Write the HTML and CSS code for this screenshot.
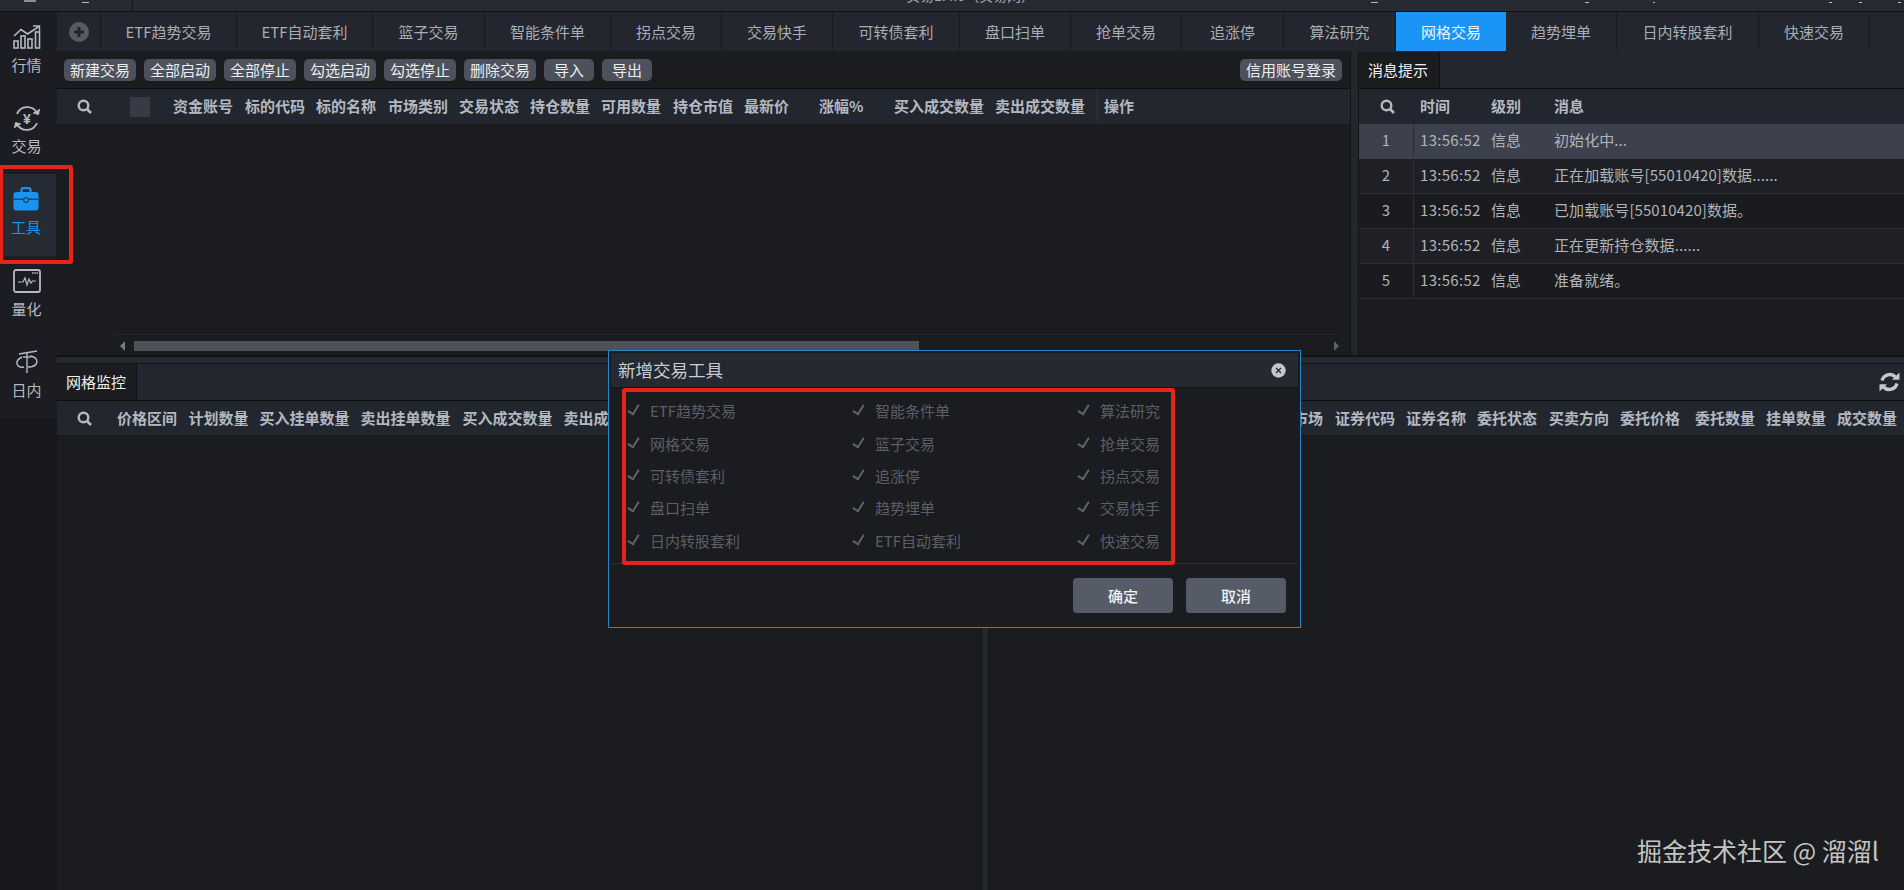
FILE: index.html
```html
<!DOCTYPE html>
<html lang="zh-CN">
<head>
<meta charset="utf-8">
<title>网格交易</title>
<link rel="stylesheet" href="styles.css">
</head>
<body>
<header class="titlebar">
  <i class="mark mark-logo"></i><i class="mark mark-a"></i><i class="mark mark-sep"></i>
  <span class="app-title">实易1.4.0（实易网）</span>
  <i class="mark mark-b"></i><i class="mark mark-c"></i><i class="mark mark-d"></i><i class="mark mark-e"></i><i class="mark mark-f"></i><i class="mark mark-g"></i>
</header>
<div class="app">
  <nav class="sidebar-col">
    <div class="sidebar">
      <div class="nav-item">
        <span class="nav-slot"><svg width="28" height="24" viewBox="0 0 28 24" fill="none" stroke="#b6bac0" stroke-width="1.6"><rect x="1" y="16" width="4" height="7"/><rect x="8" y="11" width="4" height="12"/><rect x="15" y="14" width="4" height="9"/><rect x="22.5" y="7" width="4" height="16"/><path d="M1 11 L8 4.5 L14.5 9 L26 1.5"/><path d="M20 1 L26.5 1 L26.5 6.5" stroke-width="1.4"/></svg></span>
        <span class="nav-label">行情</span>
      </div>
      <div class="nav-item">
        <span class="nav-slot"><svg width="28" height="27" viewBox="0 0 28 27" fill="none" stroke="#b6bac0" stroke-width="1.8"><path d="M4 9 A11 11 0 0 1 24 8"/><path d="M24 18 A11 11 0 0 1 4 19"/><path d="M20 8 L25.5 9.5 L26.5 4" fill="#b6bac0" stroke-width="1"/><path d="M8 19 L2.5 17.5 L1.5 23" fill="#b6bac0" stroke-width="1"/><text x="14" y="19" class="yen" text-anchor="middle">¥</text></svg></span>
        <span class="nav-label">交易</span>
      </div>
      <div class="nav-item nav-active">
        <span class="nav-slot"><svg width="26" height="24" viewBox="0 0 26 24"><path d="M8.5 6 V3 Q8.5 1.2 10.5 1.2 H15.5 Q17.5 1.2 17.5 3 V6" fill="none" stroke="#1a92f0" stroke-width="2.2"/><rect x="0.5" y="5" width="25" height="18.5" rx="3" fill="#1a92f0"/><path d="M0.5 12.2 H25.5" stroke="#17283c" stroke-width="1"/><circle cx="13" cy="13" r="2.4" fill="#1a92f0" stroke="#17283c" stroke-width="1"/></svg></span>
        <span class="nav-label">工具</span>
        <div class="note-box note-side"></div>
      </div>
      <div class="nav-item">
        <span class="nav-slot"><svg width="28" height="24" viewBox="0 0 28 24" fill="none" stroke="#b6bac0"><rect x="1" y="1" width="26" height="22" rx="2" stroke-width="1.8"/><path d="M5 13 H10 L12 9 L14 16 L16 10 L18 14 L19.5 12 H23" stroke-width="1.2"/><path d="M19 4 H25" stroke-width="1.4" stroke-dasharray="1.5 0.8"/></svg></span>
        <span class="nav-label">量化</span>
      </div>
      <div class="nav-item">
        <span class="nav-slot"><svg width="24" height="24" viewBox="0 0 24 24" fill="none" stroke="#b6bac0" stroke-width="1.4"><path d="M4 4 L22 1"/><path d="M7 7 Q1 10 2 14 Q3.5 18 9 17"/><path d="M15 6 Q22 7 22 12 Q21 17 13 17"/><path d="M12 3 V23"/><path d="M8 7 H16"/></svg></span>
        <span class="nav-label">日内</span>
      </div>
    </div>
  </nav>
  <main class="main">
    <div class="tabs">
      <div class="tab tab-add"><span class="add-circle"><svg width="12" height="12" viewBox="0 0 12 12"><path d="M6 1 V11 M1 6 H11" stroke="#23262d" stroke-width="3"/></svg></span></div>
      <div class="tab">ETF趋势交易</div>
      <div class="tab">ETF自动套利</div>
      <div class="tab">篮子交易</div>
      <div class="tab">智能条件单</div>
      <div class="tab">拐点交易</div>
      <div class="tab">交易快手</div>
      <div class="tab">可转债套利</div>
      <div class="tab">盘口扫单</div>
      <div class="tab">抢单交易</div>
      <div class="tab">追涨停</div>
      <div class="tab">算法研究</div>
      <div class="tab tab-on">网格交易</div>
      <div class="tab">趋势埋单</div>
      <div class="tab">日内转股套利</div>
      <div class="tab">快速交易</div>
      <div class="tab tab-fill"></div>
    </div>

    <section class="upper">
      <div class="panel-trade">
        <div class="toolbar">
          <button class="btn">新建交易</button>
          <button class="btn">全部启动</button>
          <button class="btn">全部停止</button>
          <button class="btn">勾选启动</button>
          <button class="btn">勾选停止</button>
          <button class="btn">删除交易</button>
          <button class="btn btn-s">导入</button>
          <button class="btn btn-s">导出</button>
          <button class="btn btn-login">信用账号登录</button>
        </div>
        <div class="thead thead-trade">
          <span class="th-tools">
            <svg class="search" width="15" height="15" viewBox="0 0 15 15" fill="none" stroke="#b4b8c0"><circle cx="6.5" cy="6.5" r="4.8" stroke-width="2.4"/><path d="M10 10 L14 14" stroke-width="2.6"/></svg>
            <i class="checkbox"></i>
          </span>
          <span>资金账号</span><span>标的代码</span><span>标的名称</span><span>市场类别</span><span>交易状态</span><span>持仓数量</span><span>可用数量</span><span>持仓市值</span><span>最新价</span><span>涨幅%</span><span>买入成交数量</span><span>卖出成交数量</span><span class="th-op">操作</span>
        </div>
        <div class="tbody"></div>
        <div class="hscroll">
          <i class="arrow arrow-l"></i>
          <i class="thumb"></i>
          <i class="arrow arrow-r"></i>
        </div>
      </div>
      <div class="vsplit"></div>
      <div class="panel-msg">
        <div class="tabbar"><div class="subtab subtab-msg">消息提示</div></div>
        <div class="thead thead-msg">
          <span class="msg-search"><svg width="15" height="15" viewBox="0 0 15 15" fill="none" stroke="#b4b8c0"><circle cx="6.5" cy="6.5" r="4.8" stroke-width="2.4"/><path d="M10 10 L14 14" stroke-width="2.6"/></svg></span>
          <span class="m-time">时间</span><span>级别</span><span>消息</span>
        </div>
        <div class="mrow mrow-sel"><span class="m-no">1</span><span class="m-time">13:56:52</span><span>信息</span><span>初始化中...</span></div>
        <div class="mrow"><span class="m-no">2</span><span class="m-time">13:56:52</span><span>信息</span><span>正在加载账号[55010420]数据......</span></div>
        <div class="mrow"><span class="m-no">3</span><span class="m-time">13:56:52</span><span>信息</span><span>已加载账号[55010420]数据。</span></div>
        <div class="mrow"><span class="m-no">4</span><span class="m-time">13:56:52</span><span>信息</span><span>正在更新持仓数据......</span></div>
        <div class="mrow"><span class="m-no">5</span><span class="m-time">13:56:52</span><span>信息</span><span>准备就绪。</span></div>
      </div>
    </section>

    <div class="hsplit"></div>

    <section class="lower">
      <div class="panel-grid">
        <div class="tabbar tabbar-low"><div class="subtab subtab-grid">网格监控</div></div>
        <div class="thead thead-grid">
          <span class="th-search"><svg width="15" height="15" viewBox="0 0 15 15" fill="none" stroke="#b4b8c0"><circle cx="6.5" cy="6.5" r="4.8" stroke-width="2.4"/><path d="M10 10 L14 14" stroke-width="2.6"/></svg></span>
          <span>价格区间</span><span>计划数量</span><span>买入挂单数量</span><span>卖出挂单数量</span><span>买入成交数量</span><span>卖出成交数量</span>
        </div>
      </div>
      <div class="vsplit vsplit-low"></div>
      <div class="panel-order">
        <div class="tabbar tabbar-low tabbar-end">
          <svg class="refresh" width="21" height="20" viewBox="0 0 21 20" fill="none" stroke="#c4c8ce" stroke-width="3.4"><path d="M3 8.5 A8 8 0 0 1 16.5 5"/><path d="M18 11.5 A8 8 0 0 1 4.5 15"/><path d="M13 7.8 H20.5 V0.5 Z" fill="#c4c8ce" stroke="none"/><path d="M8 12.2 H0.5 V19.5 Z" fill="#c4c8ce" stroke="none"/></svg>
        </div>
        <div class="thead thead-order">
          <span>市场</span><span>证券代码</span><span>证券名称</span><span>委托状态</span><span>买卖方向</span><span>委托价格</span><span>委托数量</span><span>挂单数量</span><span>成交数量</span>
        </div>
      </div>
    </section>
  </main>
</div>

<div class="modal">
  <div class="modal-head">
    <span class="modal-title">新增交易工具</span>
    <svg class="modal-close" width="15" height="15" viewBox="0 0 15 15"><circle cx="7.5" cy="7.5" r="7.2" fill="#c4c8cc"/><path d="M5 5 L10 10 M10 5 L5 10" stroke="#2a2d34" stroke-width="1.4"/></svg>
  </div>
  <div class="modal-body">
    <label class="opt"><i class="tick"></i>ETF趋势交易</label>
    <label class="opt"><i class="tick"></i>智能条件单</label>
    <label class="opt"><i class="tick"></i>算法研究</label>
    <label class="opt"><i class="tick"></i>网格交易</label>
    <label class="opt"><i class="tick"></i>篮子交易</label>
    <label class="opt"><i class="tick"></i>抢单交易</label>
    <label class="opt"><i class="tick"></i>可转债套利</label>
    <label class="opt"><i class="tick"></i>追涨停</label>
    <label class="opt"><i class="tick"></i>拐点交易</label>
    <label class="opt"><i class="tick"></i>盘口扫单</label>
    <label class="opt"><i class="tick"></i>趋势埋单</label>
    <label class="opt"><i class="tick"></i>交易快手</label>
    <label class="opt"><i class="tick"></i>日内转股套利</label>
    <label class="opt"><i class="tick"></i>ETF自动套利</label>
    <label class="opt"><i class="tick"></i>快速交易</label>
    <div class="note-box note-modal"></div>
  </div>
  <div class="modal-foot">
    <button class="mbtn">确定</button>
    <button class="mbtn">取消</button>
  </div>
</div>

<div class="watermark">掘金技术社区 @ 溜溜l</div>
</body>
</html>
```

FILE: styles.css
```css
* { box-sizing: border-box; }
html, body { margin: 0; height: 890px; overflow: hidden; }
body {
  background: #1a1c20;
  color: #b0b4ba;
  font: 15px/20px "Noto Sans CJK SC", "Liberation Sans", sans-serif;
  position: relative;
}
i { display: block; font-style: normal; }
button { font: inherit; border: 0; padding: 0; }

/* title bar, cropped at the top edge of the shot */
.titlebar {
  height: 12px;
  display: flex;
  align-items: flex-start;
  background: #272a33;
  border-bottom: 1px solid #101114;
  overflow: hidden;
}
.mark { width: 7px; height: 1px; margin-top: 2px; background: #b8bbc0; flex: none; }
.mark-logo { width: 12px; height: 2px; margin: 0 0 0 24px; background: #8b8e94; }
.mark-a { margin-left: 46px; }
.mark-sep { width: 1px; height: 11px; margin: 0 0 0 43px; background: #14161a; }
.app-title { margin: -15px 0 0 773px; width: 147px; flex: none; color: #a8abb0; white-space: nowrap; font-size: 14px; }
.mark-b { margin-left: 318px; }
.mark-c { margin-left: 207px; width: 4px; }
.mark-d { margin-left: 64px; width: 2px; }
.mark-e { margin-left: 174px; width: 3px; }
.mark-f { margin-left: 27px; width: 3px; }
.mark-g { margin-left: 36px; width: 3px; }

.app { display: flex; height: 878px; }

/* sidebar */
.sidebar-col { width: 57px; flex: none; background: #16181b; }
.sidebar { height: 406px; display: flex; flex-direction: column; background: #1b1d22; }
.nav-item {
  flex: 1;
  position: relative;
  display: flex;
  flex-direction: column;
  align-items: center;
  padding: 13px 4px 0 0;
}
.nav-slot { height: 24px; flex: none; display: flex; align-items: center; justify-content: center; }
.nav-label { margin-top: 6px; line-height: 20px; color: #b6bac0; font-size: 15px; }
.nav-active { margin: 0 1px 0 3px; padding-right: 7px; background: #272b33; }
.nav-active .nav-label { color: #1a92f0; }
.yen { font: 700 14px "Liberation Sans", sans-serif; fill: #b6bac0; stroke: none; }

.note-box { position: absolute; border: 4px solid #e8231a; border-radius: 3px; pointer-events: none; }
.note-side { left: -4px; top: -9px; width: 74px; height: 99px; }

.main { flex: 1; min-width: 0; display: flex; flex-direction: column; }

/* tabs */
.tabs {
  height: 39px;
  flex: none;
  display: grid;
  grid-template-columns: 44px 136px 136px 112px 126px 111px 111px 127px 111px 111px 102px 112px 110px 111px 142px 111px 1fr;
  background: #23262e;
}
.tab {
  display: flex;
  align-items: center;
  justify-content: center;
  color: #a9adb4;
  border-right: 1px solid #171a1f;
}
.tab-on { background: #1a94f5; color: #eaf4ff; border-right: 0; }
.tab-fill { border-right: 0; }
.add-circle {
  width: 20px;
  height: 20px;
  border-radius: 50%;
  background: #555a64;
  display: flex;
  align-items: center;
  justify-content: center;
}

/* panels */
.upper { height: 304px; flex: none; display: flex; }
.lower { flex: 1; display: flex; min-height: 0; }
.panel-trade { width: 1293px; flex: none; display: flex; flex-direction: column; }
.panel-msg { flex: 1; min-width: 0; }
.panel-grid { width: 924px; flex: none; }
.panel-order { flex: 1; min-width: 0; }
.vsplit { width: 9px; flex: none; background: #23262c; border-left: 1px solid #111316; border-right: 1px solid #111316; }
.vsplit-low { width: 8px; }
.hsplit { height: 9px; flex: none; background: #262a30; border-top: 2px solid #111316; border-bottom: 1px solid #111316; }

.toolbar { height: 38px; flex: none; display: flex; align-items: flex-start; padding: 8px 0 0 7px; border-bottom: 1px solid #0f1013; }
.btn {
  height: 22px;
  width: 72px;
  margin-right: 8px;
  border-radius: 5px;
  background: #4d515c;
  color: #eceef0;
  line-height: 22px;
  flex: none;
}
.btn-s { width: 50px; }
.btn-login { width: 102px; margin: 0 8px 0 auto; }

.thead {
  height: 35px;
  flex: none;
  display: grid;
  align-items: center;
  background: #22262e;
  color: #b4b8c0;
  font-weight: 700;
  white-space: nowrap;
}
.thead-trade { grid-template-columns: 116px 72px 71px 72px 71px 71px 71px 72px 71px 75px 75px 101px 102px 1fr; padding-bottom: 2px; }
.th-tools { display: flex; align-items: center; padding-left: 20px; margin-bottom: -2px; }
.checkbox { width: 20px; height: 20px; margin-left: 38px; background: #373b45; }
.search { display: block; }
.th-op { align-self: stretch; display: flex; align-items: center; padding-left: 6px; border-left: 1px solid #2f333b; }

.tbody { flex: 1; }
.hscroll { height: 21px; flex: none; display: flex; align-items: center; padding: 2px 0 0 5px; border-top: 1px solid #24272c; margin: 0 10px 0 58px; }
.arrow { width: 0; height: 0; border: 5px solid transparent; flex: none; }
.arrow-l { border-right-color: #767a82; border-left-width: 0; }
.arrow-r { border-left-color: #5d6168; border-right-width: 0; margin-left: 415px; }
.thumb { width: 785px; height: 10px; margin-left: 9px; background: #4d5159; flex: none; }

/* tab strip of a panel */
.tabbar { height: 38px; display: flex; align-items: flex-end; background: #23262e; border-bottom: 1px solid #0f1013; }
.tabbar-low { height: 37px; }
.tabbar-end { justify-content: flex-end; align-items: center; padding-right: 4px; }
.subtab { height: 36px; display: flex; align-items: center; background: #1a1c20; color: #eef0f2; border-right: 1px solid #0f1013; }
.subtab-msg { width: 81px; padding-left: 9px; }
.subtab-grid { width: 80px; padding-left: 9px; }

/* message table */
.thead-msg, .mrow { grid-template-columns: 55px 77px 63px 1fr; }
.thead-msg { padding-bottom: 2px; }
.msg-search { padding-left: 21px; display: flex; margin-bottom: -2px; }
.thead-msg .m-time { padding-left: 6px; }
.mrow {
  height: 35px;
  display: grid;
  align-items: center;
  border-bottom: 1px solid #2a2d33;
  background: #1e2025;
  white-space: nowrap;
  letter-spacing: 0.08px;
}
.mrow > span { margin-bottom: 2px; }
.mrow:nth-child(odd) { background: #1a1b1e; }
.mrow-sel, .mrow-sel:nth-child(odd) { background: #3d414d; border-bottom-color: #3d414d; }
.mrow > .m-no { margin-bottom: 0; padding-bottom: 2px; align-self: stretch; display: flex; align-items: center; justify-content: center; border-right: 1px solid #2c2f36; }
.mrow .m-time { padding-left: 6px; letter-spacing: 0.3px; }

/* lower tables */
.thead-grid { grid-template-columns: 60px 71.5px 71px 101px 102px 101px 101px 1fr; border-bottom: 1px solid #14161a; }
.th-search { padding-left: 20px; display: flex; }
.thead-order { grid-template-columns: 42px 71px 71px 72px 71px 75px 71px 71px 1fr; padding-left: 304px; border-bottom: 1px solid #14161a; }

/* dialog */
.modal {
  position: absolute;
  left: 608px;
  top: 350px;
  width: 693px;
  height: 278px;
  padding: 2px;
  background: #1a1c20;
  border: 1px solid #2a86c8;
  display: flex;
  flex-direction: column;
}
.modal-head {
  height: 35px;
  flex: none;
  display: flex;
  align-items: center;
  justify-content: space-between;
  padding: 0 12px 0 7px;
  background: #252932;
  border-bottom: 1px solid #14161a;
}
.modal-title { font-size: 17.5px; color: #c8ccd2; }
.modal-close { display: block; }
.modal-body {
  position: relative;
  height: 176px;
  flex: none;
  padding: 7px 0 0 18px;
  display: grid;
  grid-template-columns: repeat(3, 225px);
  grid-auto-rows: 32.4px;
  align-content: start;
  border-bottom: 1px solid #2a2d33;
}
.opt { display: flex; align-items: center; color: #5c5f66; white-space: nowrap; }
.tick {
  width: 7px;
  height: 12px;
  margin: 0 11px 0 3px;
  border-right: 2px solid #5f6369;
  border-bottom: 2px solid #5f6369;
  transform: rotate(32deg) translate(-3px, -1px);
  flex: none;
}
.note-modal { left: 11px; top: 0; width: 553px; height: 177px; }
.modal-foot { flex: 1; display: flex; justify-content: flex-end; gap: 13px; padding: 14px 12px 0 0; }
.mbtn { width: 100px; height: 35px; border-radius: 4px; background: #565b68; color: #f0f2f4; font-weight: 500; }

.watermark {
  position: absolute;
  left: 1637px;
  top: 832px;
  font-size: 25px;
  line-height: 36px;
  color: #c4c4c4;
  white-space: nowrap;
}
```
